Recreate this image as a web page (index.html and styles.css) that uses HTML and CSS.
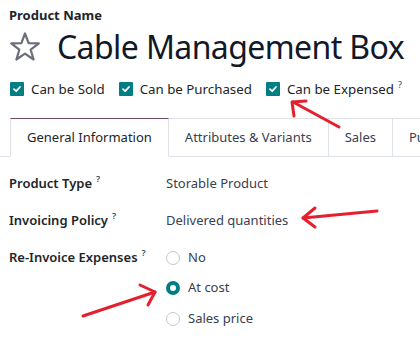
FILE: index.html
```html
<!DOCTYPE html>
<html>
<head>
<meta charset="utf-8">
<link rel="stylesheet" href="styles.css">
</head>
<body>
<div class="page">
  <div class="header">
    <div class="name-label">Product Name</div>
    <div class="title-row">
      <svg class="star" width="32" height="32" viewBox="0 0 32 32"><path d="M16 2.5 L19.6 12.2 L29.8 12.4 L21.7 18.7 L24.6 28.5 L16 22.7 L7.4 28.5 L10.3 18.7 L2.2 12.4 L12.4 12.2 Z" fill="none" stroke="#6b6f78" stroke-width="2.2" stroke-linejoin="round"/></svg>
      <h1 class="title">Cable Management Box</h1>
    </div>
    <div class="checks">
      <label class="check"><span class="box"><svg width="10" height="10" viewBox="0 0 10 10"><path d="M2 5.2 L4.2 7.2 L8 3" fill="none" stroke="#fff" stroke-width="1.8" stroke-linecap="round" stroke-linejoin="round"/></svg></span><span>Can be Sold</span></label>
      <label class="check"><span class="box"><svg width="10" height="10" viewBox="0 0 10 10"><path d="M2 5.2 L4.2 7.2 L8 3" fill="none" stroke="#fff" stroke-width="1.8" stroke-linecap="round" stroke-linejoin="round"/></svg></span><span>Can be Purchased</span></label>
      <label class="check"><span class="box"><svg width="10" height="10" viewBox="0 0 10 10"><path d="M2 5.2 L4.2 7.2 L8 3" fill="none" stroke="#fff" stroke-width="1.8" stroke-linecap="round" stroke-linejoin="round"/></svg></span><span>Can be Expensed<sup class="q">?</sup></span></label>
    </div>
  </div>
  <div class="tabs">
    <div class="tab active">General Information</div>
    <div class="tab">Attributes &amp; Variants</div>
    <div class="tab">Sales</div>
    <div class="tab">Purchase</div>
  </div>
  <div class="form">
    <div class="row">
      <div class="lbl">Product Type<sup class="q">?</sup></div>
      <div class="val">Storable Product</div>
    </div>
    <div class="row">
      <div class="lbl">Invoicing Policy<sup class="q">?</sup></div>
      <div class="val">Delivered quantities</div>
    </div>
    <div class="row radio-row">
      <div class="lbl">Re-Invoice Expenses<sup class="q">?</sup></div>
      <div class="radios">
        <div class="radio"><span class="dot"></span>No</div>
        <div class="radio"><span class="dot on"></span>At cost</div>
        <div class="radio"><span class="dot"></span>Sales price</div>
      </div>
    </div>
  </div>
  <svg class="arrows" width="420" height="340" viewBox="0 0 420 340">
    <g fill="none" stroke="#e5202e" stroke-width="3" stroke-linecap="round" stroke-linejoin="round">
      <path d="M339 127 L293 102"/>
      <path d="M294 116 L292 102 L306 101"/>
      <path d="M377 211 L303 218"/>
      <path d="M315 208 L303 218 L315 227"/>
      <path d="M83 316 L155 292"/>
      <path d="M140 285 L155 292 L148 305"/>
    </g>
  </svg>
</div>
</body>
</html>
```
FILE: styles.css
```css
html, body {
  margin: 0;
  padding: 0;
  background: #fff;
}
.page {
  position: relative;
  width: 420px;
  height: 340px;
  overflow: hidden;
  font-family: "Noto Sans", "Open Sans", sans-serif;
  font-size: 13px;
  color: #212529;
}
.header {
  padding: 6px 0 0 9px;
}
.name-label {
  font-weight: 700;
  font-size: 13px;
  line-height: 18px;
}
.title-row {
  display: flex;
  align-items: center;
  gap: 16px;
  margin-top: 3px;
  white-space: nowrap;
}
.star {
  flex: none;
}
.title {
  margin: 0;
  font-weight: 400;
  font-size: 32px;
  letter-spacing: -0.6px;
  line-height: 40px;
  color: #111827;
}
.checks {
  display: flex;
  gap: 14px;
  margin-top: 13px;
  padding-left: 1px;
}
.check {
  display: flex;
  align-items: center;
  gap: 7px;
  font-size: 13.3px;
  color: #212529;
  line-height: 18px;
}
.box {
  width: 14px;
  height: 14px;
  background: #017e84;
  border-radius: 1px;
  display: flex;
  align-items: center;
  justify-content: center;
}
.q {
  font-size: 9px;
  margin-left: 4px;
  color: #374151;
  vertical-align: 6px;
  line-height: 0;
}
.tabs {
  display: flex;
  margin-top: 20px;
  padding-left: 10px;
  border-bottom: 1px solid #dee2e6;
  white-space: nowrap;
}
.tab {
  padding: 0 16px;
  height: 37px;
  line-height: 37px;
  border-top: 1px solid #dee2e6;
  border-right: 1px solid #dee2e6;
  color: #374151;
  margin-bottom: -1px;
}
.tab.active {
  border-top-color: #6b4a63;
  border-left: 1px solid #dee2e6;
  border-bottom: 1px solid #fff;
  color: #212529;
}
.form {
  padding: 8px 0 0 9px;
}
.row {
  display: flex;
  align-items: flex-start;
  line-height: 37px;
}
.lbl {
  width: 157px;
  flex: none;
  font-weight: 600;
  color: #212529;
}
.val {
  color: #374151;
}
.radios {
  display: flex;
  flex-direction: column;
}
.radio {
  display: flex;
  align-items: center;
  gap: 8px;
  height: 31px;
  line-height: 31px;
  color: #374151;
}
.radio:first-child {
  height: 37px;
  margin-bottom: -4px;
}
.dot {
  width: 12px;
  height: 12px;
  border: 1px solid #c3c7cc;
  border-radius: 50%;
  box-sizing: content-box;
}
.dot.on {
  width: 6px;
  height: 6px;
  border: 4px solid #017e84;
  background: #fff;
}
.arrows {
  position: absolute;
  left: 0;
  top: 0;
  pointer-events: none;
}
```
